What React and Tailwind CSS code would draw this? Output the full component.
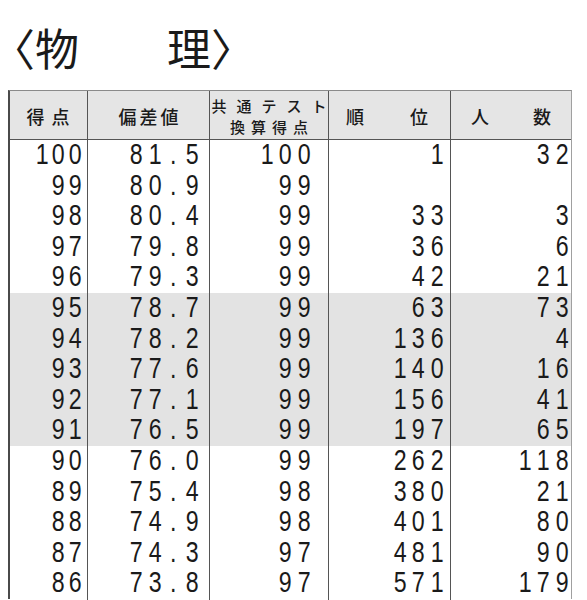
const rows = [
  ["100", "81.5", "100", "1", "32"],
  ["99", "80.9", "99", "", ""],
  ["98", "80.4", "99", "33", "3"],
  ["97", "79.8", "99", "36", "6"],
  ["96", "79.3", "99", "42", "21"],
  ["95", "78.7", "99", "63", "73"],
  ["94", "78.2", "99", "136", "4"],
  ["93", "77.6", "99", "140", "16"],
  ["92", "77.1", "99", "156", "41"],
  ["91", "76.5", "99", "197", "65"],
  ["90", "76.0", "99", "262", "118"],
  ["89", "75.4", "98", "380", "21"],
  ["88", "74.9", "98", "401", "80"],
  ["87", "74.3", "97", "481", "90"],
  ["86", "73.8", "97", "571", "179"],
];

// each column: cell padding + character pitch (digits sit on a fixed grid)
const cols = [
  { cell: "pr-[4px]", ch: "w-[16.5px]" },
  { cell: "pr-[8px] border-l-[1.5px] border-[#555]", ch: "w-[18.5px]" },
  { cell: "pr-[15px] border-l-[1.5px] border-[#555]", ch: "w-[18.5px]" },
  { cell: "pr-[4px] border-l-[1.5px] border-[#555]", ch: "w-[18.5px]" },
  { cell: "pr-[2px] border-l-[1.5px] border-[#555]", ch: "w-[18.5px]" },
];

function Num({ value, ch }) {
  return (
    <span className="flex">
      {value.split("").map((c, i) => (
        <span key={i} className={`inline-block scale-x-[0.8] text-center ${ch}`}>
          {c}
        </span>
      ))}
    </span>
  );
}

export default function App() {
  return (
    <div className="h-[600px] overflow-hidden bg-white text-[#1a1a1a] font-['Noto_Sans_CJK_JP',sans-serif]">
      <div className="flex h-[90px] items-center pt-[3px] pl-[2px] text-[44px] leading-none">
        <span className="-ml-[11px]">〈</span>
        <span>物</span>
        <span>　　</span>
        <span>理</span>
        <span>〉</span>
      </div>

      <div className="ml-[8px] w-[564px] border-t border-r border-l-2 border-t-[#8a8a8a] border-r-[#a0a0a0] border-l-[#4a4a4a]">
        <div className="grid h-[49px] grid-cols-[77px_122px_119px_122px_123px] grid-rows-[49px] border-b-[1.5px] border-[#555] bg-[#e5e5e5] font-medium leading-none">
          <div className="flex items-center justify-center pl-[6px] text-[18px] tracking-[7px]">
            得点
          </div>
          <div className="flex items-center justify-center border-l-[1.5px] border-[#555] pl-[3px] text-[18px] tracking-[3px]">
            偏差値
          </div>
          <div className="flex flex-col items-center justify-center gap-[6px] whitespace-nowrap border-l-[1.5px] border-[#555] text-[15px]">
            <span className="-mr-[10px] tracking-[10px]">共通テスト</span>
            <span className="-mr-[6px] tracking-[6px]">換算得点</span>
          </div>
          <div className="flex items-center justify-between border-l-[1.5px] border-[#555] pl-[17px] pr-[22px] text-[18px]">
            <span>順</span>
            <span>位</span>
          </div>
          <div className="flex items-center justify-between border-l-[1.5px] border-[#555] pl-[20px] pr-[22px] text-[18px]">
            <span>人</span>
            <span>数</span>
          </div>
        </div>

        {rows.map((r, i) => (
          <div
            key={i}
            className={`grid h-[30.6px] grid-cols-[77px_122px_119px_122px_123px] font-['Liberation_Sans',sans-serif] text-[29px] leading-none ${
              i >= 5 && i < 10 ? "bg-[#e3e3e3]" : "bg-white"
            }`}
          >
            {r.map((v, j) => (
              <div key={j} className={`flex items-center justify-end pb-[3px] ${cols[j].cell}`}>
                <Num value={v} ch={cols[j].ch} />
              </div>
            ))}
          </div>
        ))}
      </div>
    </div>
  );
}
